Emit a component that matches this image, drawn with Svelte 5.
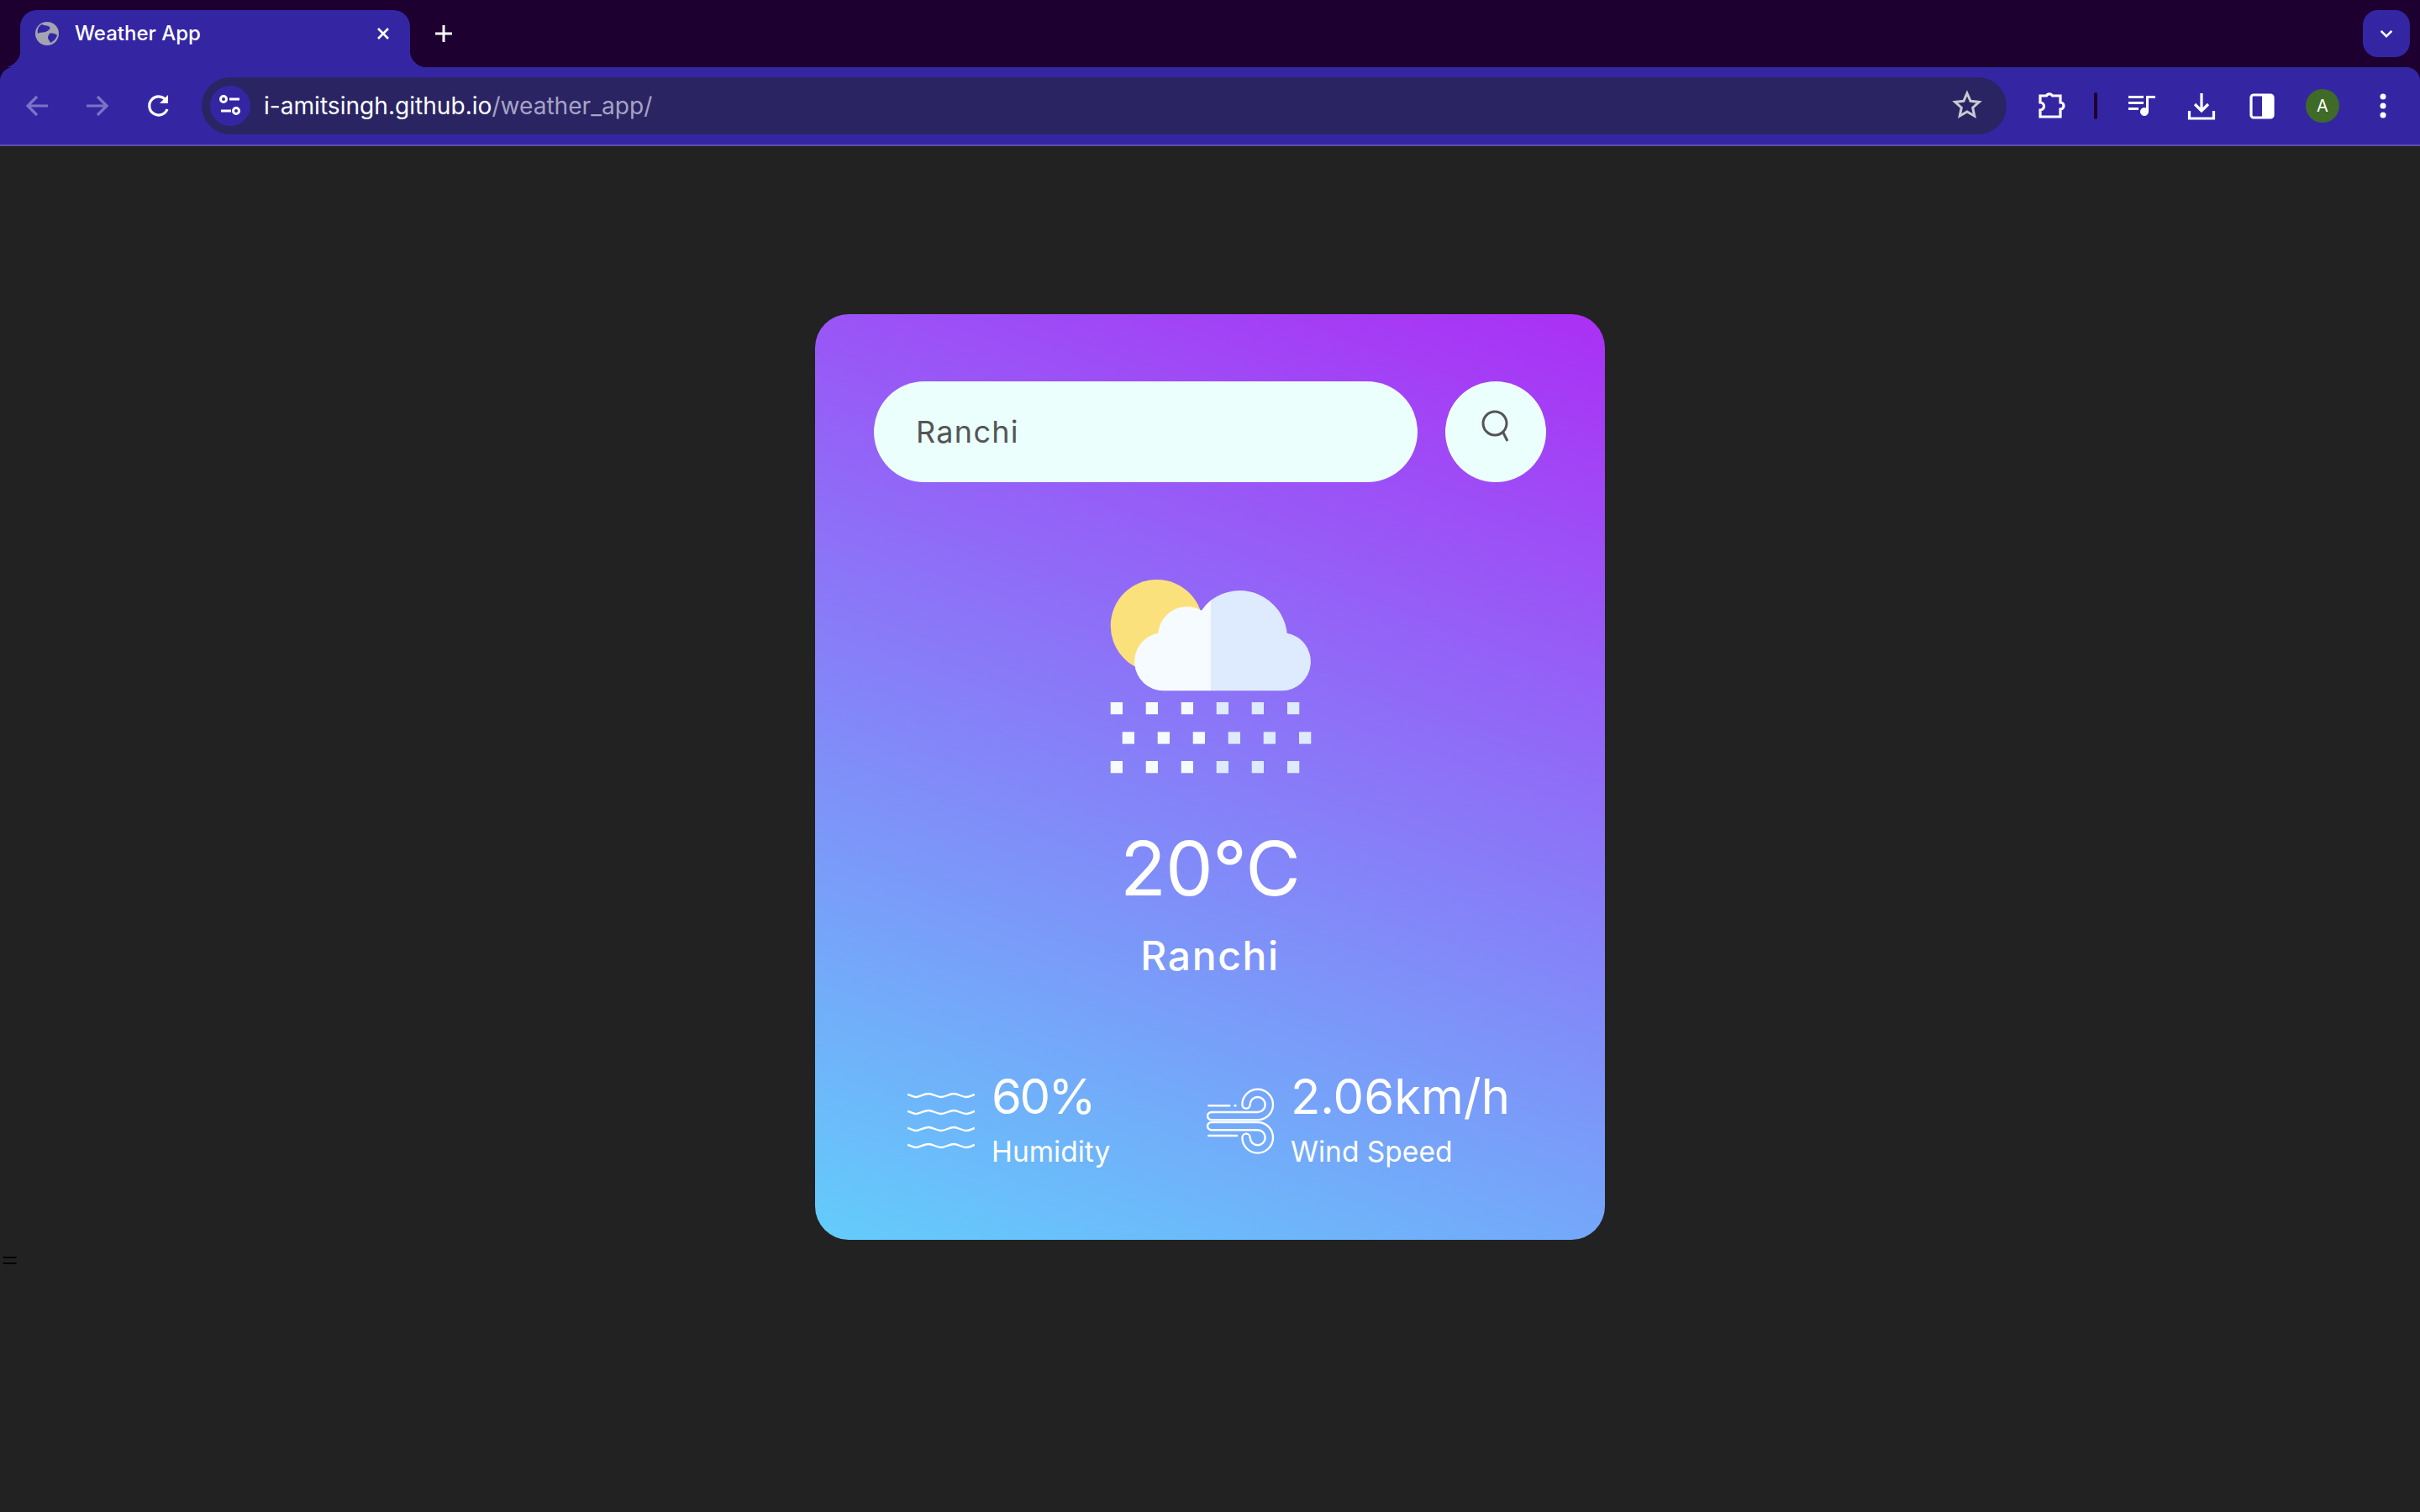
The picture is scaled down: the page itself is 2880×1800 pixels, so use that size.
<script>
  const temp = '20°C';
  const city = 'Ranchi';
  const flakes = [];
  const colsA = [41.7, 83.7, 125.7, 167.7, 209.7, 252];
  const colsB = [55.7, 97.7, 139.7, 181.7, 223.7, 266];
  for (const [y, cols] of [[176, colsA], [211.3, colsB], [246, colsA]]) {
    cols.forEach((x, i) => flakes.push({ x, y, light: i < 3 }));
  }
  const wavesY = [3, 23, 43, 63];
</script>

<div class="browser">
  <div class="tabstrip">
    <div class="tab">
      <svg class="favicon" viewBox="0 0 28 28">
        <circle cx="14" cy="14" r="14" fill="#a3a3b2" />
        <path d="M8 3c3 2 7 1 9 3s-2 5-5 6-7 0-9 2c-1-5 1-9 5-11zM17 14c3-1 7 0 9 2-1 4-4 7-8 9-1-3-3-4-3-6s1-4 2-5z" fill="#3426a3" />
      </svg>
      <span class="tab-title">Weather App</span>
      <svg class="tab-close" viewBox="0 0 20 20"><path d="M4 4l12 12M16 4L4 16" /></svg>
    </div>
    <svg class="new-tab" viewBox="0 0 24 24"><path d="M12 2v20M2 12h20" /></svg>
    <div class="expand">
      <svg viewBox="0 0 20 20"><path d="M3 6.5l7 7 7-7" /></svg>
    </div>
  </div>

  <div class="toolbar">
    <button class="tool dim" aria-label="Back">
      <svg viewBox="0 0 40 40"><path d="M32 20H9M19 9L8 20l11 11" /></svg>
    </button>
    <button class="tool dim" aria-label="Forward">
      <svg viewBox="0 0 40 40"><path d="M6 20h23M19 9l11 11-11 11" /></svg>
    </button>
    <button class="tool" aria-label="Reload">
      <svg viewBox="0 0 40 40"><path d="M30 24a11 11 0 1 1-1-10" /><path class="solid" d="M31 7v10H21z" /></svg>
    </button>

    <div class="omnibox">
      <span class="site-info">
        <svg viewBox="0 0 28 28">
          <circle cx="6" cy="6" r="3.5" /><path d="M13 6h12M3 20h12" /><circle cx="21" cy="20" r="3.5" />
        </svg>
      </span>
      <span class="url">i-amitsingh.github.io<span class="url-path">/weather_app/</span></span>
      <svg class="star" viewBox="0 0 40 40">
        <path d="M20 5l4.1 9.3 10.2 1.1-7.6 6.8 2.1 9.9L20 27l-8.8 5.1 2.1-9.9-7.6-6.8 10.2-1.1z" />
      </svg>
    </div>

    <button class="tool first" aria-label="Extensions">
      <svg viewBox="0 0 40 40"><path d="M7 8h7.5a4 4 0 0 1 7 0H31v8a4 4 0 0 1 0 8v9H7v-8a4.5 4.5 0 0 0 0-9z" /></svg>
    </button>
    <span class="sep"></span>
    <button class="tool" aria-label="Media">
      <svg viewBox="0 0 40 40">
        <path class="solid" d="M5 8h18v3H5zM5 15h18v3H5zM5 22h12v3H5zM26 8h11v3h-8v16a5 5 0 1 1-3-4.6z" />
      </svg>
    </button>
    <button class="tool" aria-label="Downloads">
      <svg viewBox="0 0 40 40"><path d="M20 5v21M12 18l8 8 8-8M5.500 26v9h29v-9" /></svg>
    </button>
    <button class="tool" aria-label="Side panel">
      <svg viewBox="0 0 40 40"><rect x="7" y="7" width="26" height="27" rx="3" /><path class="solid" d="M20 7h13v27H20z" /></svg>
    </button>
    <div class="tool"><span class="avatar">A</span></div>
    <button class="tool" aria-label="Menu">
      <svg viewBox="0 0 40 40"><circle class="solid" cx="20" cy="9" r="3.500" /><circle class="solid" cx="20" cy="20" r="3.500" /><circle class="solid" cx="20" cy="31" r="3.500" /></svg>
    </button>
  </div>

  <main class="page">
    <section class="card">
      <div class="search">
        <input type="text" value={city} />
        <button class="search-btn" aria-label="Search">
          <svg viewBox="0 0 44 44"><circle cx="21" cy="16" r="14" /><path d="M31 27l5 10" /></svg>
        </button>
      </div>

      <svg class="weather-icon" viewBox="0 0 320 280">
        <circle cx="96.700" cy="85" r="55" fill="#fbe17c" />
        <path d="M161 54.600A56.700 56.700 0 0 1 251.700 93.700A34.600 34.600 0 0 1 245.500 162.300H161z" fill="#deebfe" />
        <path d="M161 162.300H104.500A34.600 34.600 0 0 1 98.300 93.700A34.700 34.700 0 0 1 150 66.700A56.700 56.700 0 0 1 161 54.600z" fill="#f6fbff" />
        {#each flakes as f}
          <rect x={f.x} y={f.y} width="14.300" height="14.300" fill={f.light ? '#f6fbff' : '#deebfe'} />
        {/each}
      </svg>

      <h1 class="temp">{temp}</h1>
      <h2 class="city">{city}</h2>

      <div class="details">
        <div class="col">
          <svg class="humidity" viewBox="0 0 80 70">
            {#each wavesY as y}
              <path d="M0 {y}c5 1 6 3 10 3s10-4 15-4 10 4 15 4 10-4 15-4 10 4 15 4 6-2 10-3" />
            {/each}
          </svg>
          <div>
            <p class="value percent">60%</p>
            <p class="label">Humidity</p>
          </div>
        </div>
        <div class="col">
          <svg class="wind" viewBox="0 0 82 82">
            <path d="M5.700 30H60.700A9 9 0 1 0 51.700 21A4.650 4.650 0 0 1 42.400 21A18.300 18.300 0 1 1 60.700 39.300H5.700A4.650 4.650 0 0 1 5.700 30z" />
            <path transform="matrix(1 0 0 -1 0 81.300)" d="M5.700 30H60.700A9 9 0 1 0 51.700 21A4.650 4.650 0 0 1 42.400 21A18.300 18.300 0 1 1 60.700 39.300H5.700A4.650 4.650 0 0 1 5.700 30z" />
            <path d="M2.300 22.300H27.300M33.500 22.300h1M2.300 58H36" />
          </svg>
          <div>
            <p class="value">2.06km/h</p>
            <p class="label">Wind Speed</p>
          </div>
        </div>
      </div>
    </section>
    <p class="stray">=</p>
  </main>
</div>

<style>
  :global(body) {
    margin: 0;
    background: #222;
    font-family: Inter, "Liberation Sans", sans-serif;
  }

  svg { display: block; }

  .browser {
    min-height: 1800px;
    background: #222;
  }

  /* tab strip */
  .tabstrip {
    position: relative;
    display: flex;
    align-items: flex-start;
    height: 80px;
    padding-left: 24px;
    box-sizing: border-box;
    background: #1d0030;
  }

  .tab {
    position: relative;
    display: flex;
    align-items: flex-start;
    width: 464px;
    height: 68px;
    margin-top: 12px;
    box-sizing: border-box;
    padding: 14px 0 0 18px;
    border-radius: 20px 20px 0 0;
    background: #3426a3;
    color: #fff;
  }

  .tab::before,
  .tab::after {
    content: '';
    position: absolute;
    bottom: 0;
    width: 20px;
    height: 20px;
  }

  .tab::before {
    left: -20px;
    background: radial-gradient(circle at 0 0, transparent 20px, #3426a3 20.5px);
  }

  .tab::after {
    right: -20px;
    background: radial-gradient(circle at 100% 0, transparent 20px, #3426a3 20.5px);
  }

  .favicon { width: 28px; height: 28px; }

  .tab-title {
    margin-left: 19px;
    font-size: 24px;
    font-weight: 500;
    line-height: 28px;
  }

  .tab-close {
    width: 20px;
    height: 20px;
    margin: 4px 0 0 auto;
    margin-right: 22px;
    fill: none;
    stroke: #fff;
    stroke-width: 2.600;
  }

  .new-tab {
    width: 24px;
    height: 24px;
    margin: 28px 0 0 28px;
    fill: none;
    stroke: #fff;
    stroke-width: 3;
  }

  .expand {
    display: flex;
    align-items: center;
    justify-content: center;
    width: 56px;
    height: 56px;
    margin: 12px 12px 0 auto;
    border-radius: 18px;
    background: #3426a3;
  }

  .expand svg {
    width: 18px;
    height: 18px;
    fill: none;
    stroke: #fff;
    stroke-width: 3;
  }

  /* toolbar */
  .toolbar {
    display: flex;
    align-items: center;
    height: 94px;
    box-sizing: border-box;
    padding: 0 8px 0 9px;
    border-bottom: 2px solid #5b4fa9;
    border-radius: 16px 16px 0 0;
    background: #3426a3;
    box-shadow: 0 -16px 0 0 #1d0030;
  }

  .tool {
    display: flex;
    flex: none;
    align-items: center;
    justify-content: center;
    width: 72px;
    height: 68px;
    padding: 0;
    border: 0;
    background: none;
  }

  .tool svg {
    width: 40px;
    height: 40px;
    fill: none;
    stroke: #fff;
    stroke-width: 3.200;
  }

  .tool .solid {
    fill: #fff;
    stroke: none;
  }

  .tool.dim svg { stroke: #7d72c6; }
  .tool.first { margin-left: 17px; }

  .sep {
    flex: none;
    width: 4px;
    height: 32px;
    margin: 0 16px 0 15px;
    border-radius: 2px;
    background: #1d0030;
  }

  .omnibox {
    display: flex;
    flex: 1;
    align-items: center;
    height: 68px;
    margin-left: 15px;
    padding-left: 10px;
    border-radius: 34px;
    background: #2a2463;
  }

  .site-info {
    display: flex;
    align-items: center;
    justify-content: center;
    width: 48px;
    height: 48px;
    border-radius: 50%;
    background: #3426a3;
  }

  .site-info svg {
    width: 28px;
    height: 28px;
    fill: none;
    stroke: #fff;
    stroke-width: 3;
  }

  .url {
    margin-left: 16px;
    color: #fff;
    font-size: 28.100px;
  }

  .url-path { color: #a7a3c4; }

  .star {
    width: 40px;
    height: 40px;
    margin: 0 27px 0 auto;
    fill: none;
    stroke: #c9c9d1;
    stroke-width: 3;
  }

  .avatar {
    display: flex;
    align-items: center;
    justify-content: center;
    width: 40px;
    height: 40px;
    border-radius: 50%;
    background: #3f6a27;
    color: #fff;
    font-size: 20px;
  }

  /* weather card */
  .page { padding-top: 200px; }

  .card {
    width: 940px;
    height: 1102px;
    margin: 0 auto;
    box-sizing: border-box;
    padding-top: 80px;
    border-radius: 40px;
    background: linear-gradient(20deg, #63cdfb, #ab2ff5);
    color: #fff;
    text-align: center;
  }

  .search {
    display: flex;
    gap: 33px;
    padding: 0 70px;
  }

  .search input {
    flex: 1;
    min-width: 0;
    height: 120px;
    box-sizing: border-box;
    padding: 0 50px;
    border: 0;
    border-radius: 60px;
    outline: 0;
    background: #ebfffc;
    color: #555;
    font-family: inherit;
    font-size: 36px;
    letter-spacing: 1.300px;
  }

  .search-btn {
    display: flex;
    flex: none;
    align-items: center;
    justify-content: center;
    width: 120px;
    height: 120px;
    padding: 0 0 8px;
    border: 0;
    border-radius: 50%;
    background: #ebfffc;
  }

  .search-btn svg {
    width: 44px;
    height: 44px;
    fill: none;
    stroke: #555;
    stroke-width: 3;
  }

  .weather-icon {
    width: 320px;
    height: 280px;
    margin: 86px auto 0;
  }

  .temp {
    margin: 44px 0 0;
    font-size: 90px;
    font-weight: 400;
    line-height: 100px;
    letter-spacing: -0.800px;
  }

  .city {
    margin: 24px 0 0;
    font-size: 48px;
    font-weight: 500;
    line-height: 60px;
    letter-spacing: 1.600px;
  }

  .details {
    display: grid;
    grid-template-columns: 356px auto;
    margin-top: 102px;
    padding-left: 110px;
    text-align: left;
  }

  .col {
    display: flex;
    align-items: center;
    gap: 20px;
  }

  .humidity {
    flex: none;
    width: 80px;
    height: 70px;
    margin-top: 5px;
    fill: none;
    stroke: #fff;
    stroke-width: 2.400;
  }

  .wind {
    flex: none;
    width: 82px;
    height: 82px;
    margin: 5px -2px 0 0;
    fill: none;
    stroke: #fff;
    stroke-width: 2.400;
    stroke-linecap: round;
  }

  .value {
    margin: 0;
    font-size: 58px;
    line-height: 70px;
  }

  .percent { letter-spacing: -2.500px; }

  .label {
    margin: 7px 0 0;
    font-size: 33.500px;
    line-height: 48px;
  }

  .stray {
    margin: 0;
    padding: 6px 0 0 2px;
    color: #000;
    font-family: "Liberation Serif", serif;
    font-size: 34px;
    line-height: 37px;
  }
</style>
